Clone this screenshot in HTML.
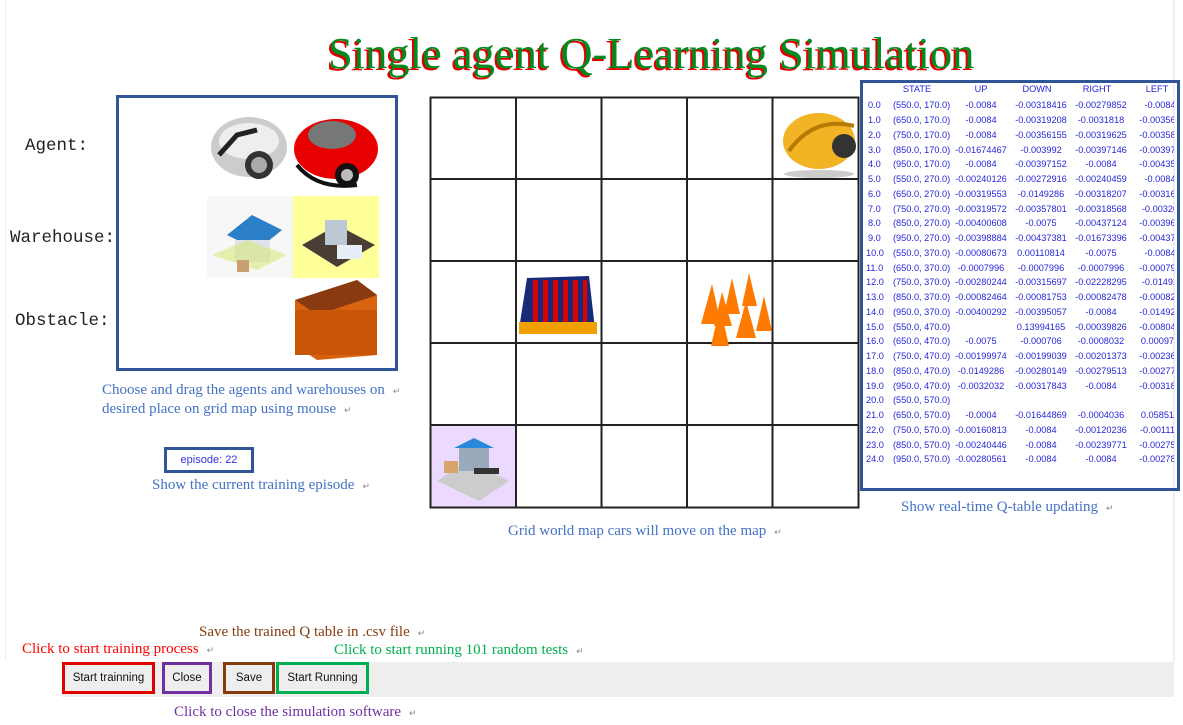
<!DOCTYPE html>
<html><head><meta charset="utf-8"><style>
body{margin:0;width:1183px;height:725px;position:relative;background:#fff;overflow:hidden;font-family:"Liberation Serif",serif}
.a{position:absolute}
.cap{position:absolute;font-family:"Liberation Serif",serif;font-size:15px;color:#4472c4;white-space:nowrap}
.ret{font-size:9px;color:#888;margin-left:8px}
.lbl{position:absolute;font-family:"Liberation Mono",monospace;font-size:17.5px;color:#222}
.q{position:absolute;left:0;width:330px;font-family:"Liberation Sans",sans-serif;font-size:9.2px;color:#2626d9;white-space:nowrap;height:14px}
.q span{position:absolute;top:0}
.q .c{width:80px;text-align:center}
.btn{position:absolute;top:662px;height:32px;background:#eee;font-family:"Liberation Sans",sans-serif;font-size:11.5px;color:#111;display:flex;align-items:center;justify-content:center;box-sizing:border-box}
</style></head><body>
<div class="a" style="left:5px;top:0;width:1px;height:660px;background:#eee"></div>
<div class="a" style="left:1173px;top:0;width:2px;height:662px;background:#eee"></div>

<div class="a" style="left:326px;top:28px;font-size:44.5px;color:#e00000;white-space:nowrap;line-height:54px">Single agent Q-Learning Simulation</div>
<div class="a" style="left:328px;top:26px;font-size:44.5px;color:#008a20;white-space:nowrap;line-height:54px">Single agent Q-Learning Simulation</div>

<div class="lbl" style="left:25px;top:136px">Agent:</div>
<div class="lbl" style="left:10px;top:228px">Warehouse:</div>
<div class="lbl" style="left:15px;top:311px">Obstacle:</div>

<div class="a" style="left:116px;top:95px;width:276px;height:270px;border:3px solid #2f5597"></div>
<svg class="a" style="left:207px;top:105px" width="175" height="260">
 <ellipse cx="42" cy="42" rx="38" ry="30" fill="#ccc"/><ellipse cx="42" cy="36" rx="30" ry="18" fill="#eee"/><path d="M12 50 L30 30 L50 25" stroke="#222" stroke-width="5" fill="none"/><circle cx="52" cy="60" r="14" fill="#333"/><circle cx="52" cy="60" r="8" fill="#aaa"/>
 <ellipse cx="129" cy="44" rx="42" ry="30" fill="#e80000"/><ellipse cx="125" cy="30" rx="24" ry="14" fill="#777"/><circle cx="140" cy="70" r="12" fill="#111"/><circle cx="140" cy="70" r="6" fill="#bbb"/><path d="M90 60 Q110 85 150 80" stroke="#111" stroke-width="4" fill="none"/>
 <rect x="0" y="91" width="86" height="82" fill="#f7f7f7"/><polygon points="20,130 45,110 75,125 50,145" fill="#2a7fc7"/><rect x="28" y="135" width="35" height="22" fill="#dde4ee"/><polygon points="5,150 50,165 80,150 40,135" fill="#d8e87a" opacity=".6"/><rect x="30" y="155" width="12" height="12" fill="#c9a070"/>
 <rect x="86" y="91" width="86" height="82" fill="#ffff99"/><polygon points="95,140 130,120 168,140 130,162" fill="#4a3d33"/><rect x="118" y="115" width="22" height="25" fill="#bcc8d4"/><rect x="130" y="140" width="25" height="14" fill="#e6eef8"/>
 <polygon points="88,195 150,175 170,190 170,250 110,255 88,240" fill="#d9620e"/><polygon points="88,195 150,175 170,190 110,210" fill="#8a3a10"/><rect x="88" y="205" width="82" height="45" fill="#c85508"/>
</svg>

<div class="cap" style="left:102px;top:382px">Choose and drag the agents and warehouses on<span class="ret">↵</span></div>
<div class="cap" style="left:102px;top:401px">desired place on grid map using mouse<span class="ret">↵</span></div>

<div class="a" style="left:164px;top:447px;width:84px;height:20px;border:3px solid #2f5597;font-family:'Liberation Sans',sans-serif;font-size:11px;color:#3333dd;text-align:center;line-height:20px">episode: 22</div>
<div class="cap" style="left:152px;top:477px">Show the current training episode<span class="ret">↵</span></div>

<svg class="a" style="left:429px;top:96px" width="432" height="416">
 <rect x="1.5" y="329.5" width="85" height="82" fill="#ecd9ff"/>
 <g stroke="#222" stroke-width="2" fill="none">
  <rect x="1.5" y="1.5" width="428" height="410"/>
  <path d="M87 1V412M172.5 1V412M258 1V412M343.5 1V412M1 83H430M1 165H430M1 247H430M1 329H430"/>
 </g>
 <g>
  <ellipse cx="390" cy="45" rx="36" ry="28" fill="#f2b324"/><path d="M360 55 Q385 20 425 30" stroke="#b57a00" stroke-width="4" fill="none"/><circle cx="415" cy="50" r="12" fill="#333"/><ellipse cx="390" cy="78" rx="35" ry="4" fill="#ccc"/>
  <polygon points="90,233 98,182 160,180 166,233" fill="#1a2a7a"/><g fill="#d00"><rect x="104" y="184" width="5" height="44"/><rect x="114" y="184" width="5" height="44"/><rect x="124" y="184" width="5" height="44"/><rect x="134" y="184" width="5" height="44"/><rect x="144" y="184" width="5" height="44"/><rect x="154" y="184" width="4" height="44"/></g><rect x="90" y="226" width="78" height="12" fill="#f0a000"/>
  <g fill="#ff7a00"><polygon points="272,228 283,188 292,228"/><polygon points="285,230 293,196 303,230"/><polygon points="295,218 303,182 311,218"/><polygon points="313,210 320,177 328,210"/><polygon points="307,242 317,205 327,242"/><polygon points="282,250 291,210 300,250"/><polygon points="327,235 335,200 343,235"/></g>
  <polygon points="8,385 50,405 80,385 40,365" fill="#ccc"/><rect x="30" y="350" width="30" height="25" fill="#99aabb"/><polygon points="25,352 45,342 65,352" fill="#2a88d8"/><rect x="15" y="365" width="14" height="12" fill="#d8a46a"/><rect x="45" y="372" width="25" height="6" fill="#333"/>
 </g>
</svg>
<div class="cap" style="left:508px;top:523px">Grid world map cars will move on the map<span class="ret">↵</span></div>

<div class="a" style="left:860px;top:80px;width:314px;height:405px;border:3px solid #2f5597"></div>
<div class="cap" style="left:901px;top:499px">Show real-time Q-table updating<span class="ret">↵</span></div>

<div class="a" style="left:863px;top:83px;width:311px;height:405px;overflow:hidden">
<div class="a" style="left:-863px;top:-83px;width:1183px;height:600px">
<div class="q" style="left:863px;top:84px"><span class="c" style="left:14px">STATE</span><span class="c" style="left:78px">UP</span><span class="c" style="left:134px">DOWN</span><span class="c" style="left:194px">RIGHT</span><span class="c" style="left:254px">LEFT</span></div>
<div class="q" style="left:863px;top:100px"><span style="left:5px">0.0</span><span style="left:30px">(550.0, 170.0)</span><span class="c" style="left:78px">-0.0084</span><span class="c" style="left:138px">-0.00318416</span><span class="c" style="left:198px">-0.00279852</span><span class="c" style="left:257px">-0.0084</span></div>
<div class="q" style="left:863px;top:115px"><span style="left:5px">1.0</span><span style="left:30px">(650.0, 170.0)</span><span class="c" style="left:78px">-0.0084</span><span class="c" style="left:138px">-0.00319208</span><span class="c" style="left:198px">-0.0031818</span><span class="c" style="left:257px">-0.003561</span></div>
<div class="q" style="left:863px;top:130px"><span style="left:5px">2.0</span><span style="left:30px">(750.0, 170.0)</span><span class="c" style="left:78px">-0.0084</span><span class="c" style="left:138px">-0.00356155</span><span class="c" style="left:198px">-0.00319625</span><span class="c" style="left:257px">-0.003581</span></div>
<div class="q" style="left:863px;top:145px"><span style="left:5px">3.0</span><span style="left:30px">(850.0, 170.0)</span><span class="c" style="left:78px">-0.01674467</span><span class="c" style="left:138px">-0.003992</span><span class="c" style="left:198px">-0.00397146</span><span class="c" style="left:257px">-0.003974</span></div>
<div class="q" style="left:863px;top:159px"><span style="left:5px">4.0</span><span style="left:30px">(950.0, 170.0)</span><span class="c" style="left:78px">-0.0084</span><span class="c" style="left:138px">-0.00397152</span><span class="c" style="left:198px">-0.0084</span><span class="c" style="left:257px">-0.004357</span></div>
<div class="q" style="left:863px;top:174px"><span style="left:5px">5.0</span><span style="left:30px">(550.0, 270.0)</span><span class="c" style="left:78px">-0.00240126</span><span class="c" style="left:138px">-0.00272916</span><span class="c" style="left:198px">-0.00240459</span><span class="c" style="left:257px">-0.0084</span></div>
<div class="q" style="left:863px;top:189px"><span style="left:5px">6.0</span><span style="left:30px">(650.0, 270.0)</span><span class="c" style="left:78px">-0.00319553</span><span class="c" style="left:138px">-0.0149286</span><span class="c" style="left:198px">-0.00318207</span><span class="c" style="left:257px">-0.003164</span></div>
<div class="q" style="left:863px;top:204px"><span style="left:5px">7.0</span><span style="left:30px">(750.0, 270.0)</span><span class="c" style="left:78px">-0.00319572</span><span class="c" style="left:138px">-0.00357801</span><span class="c" style="left:198px">-0.00318568</span><span class="c" style="left:257px">-0.00320</span></div>
<div class="q" style="left:863px;top:218px"><span style="left:5px">8.0</span><span style="left:30px">(850.0, 270.0)</span><span class="c" style="left:78px">-0.00400608</span><span class="c" style="left:138px">-0.0075</span><span class="c" style="left:198px">-0.00437124</span><span class="c" style="left:257px">-0.003964</span></div>
<div class="q" style="left:863px;top:233px"><span style="left:5px">9.0</span><span style="left:30px">(950.0, 270.0)</span><span class="c" style="left:78px">-0.00398884</span><span class="c" style="left:138px">-0.00437381</span><span class="c" style="left:198px">-0.01673396</span><span class="c" style="left:257px">-0.004378</span></div>
<div class="q" style="left:863px;top:248px"><span style="left:3px">10.0</span><span style="left:30px">(550.0, 370.0)</span><span class="c" style="left:78px">-0.00080673</span><span class="c" style="left:138px">0.00110814</span><span class="c" style="left:198px">-0.0075</span><span class="c" style="left:257px">-0.0084</span></div>
<div class="q" style="left:863px;top:263px"><span style="left:3px">11.0</span><span style="left:30px">(650.0, 370.0)</span><span class="c" style="left:78px">-0.0007996</span><span class="c" style="left:138px">-0.0007996</span><span class="c" style="left:198px">-0.0007996</span><span class="c" style="left:257px">-0.000796</span></div>
<div class="q" style="left:863px;top:277px"><span style="left:3px">12.0</span><span style="left:30px">(750.0, 370.0)</span><span class="c" style="left:78px">-0.00280244</span><span class="c" style="left:138px">-0.00315697</span><span class="c" style="left:198px">-0.02228295</span><span class="c" style="left:257px">-0.01492</span></div>
<div class="q" style="left:863px;top:292px"><span style="left:3px">13.0</span><span style="left:30px">(850.0, 370.0)</span><span class="c" style="left:78px">-0.00082464</span><span class="c" style="left:138px">-0.00081753</span><span class="c" style="left:198px">-0.00082478</span><span class="c" style="left:257px">-0.000821</span></div>
<div class="q" style="left:863px;top:307px"><span style="left:3px">14.0</span><span style="left:30px">(950.0, 370.0)</span><span class="c" style="left:78px">-0.00400292</span><span class="c" style="left:138px">-0.00395057</span><span class="c" style="left:198px">-0.0084</span><span class="c" style="left:257px">-0.014928</span></div>
<div class="q" style="left:863px;top:322px"><span style="left:3px">15.0</span><span style="left:30px">(550.0, 470.0)</span><span class="c" style="left:138px">0.13994165</span><span class="c" style="left:198px">-0.00039826</span><span class="c" style="left:257px">-0.008045</span></div>
<div class="q" style="left:863px;top:336px"><span style="left:3px">16.0</span><span style="left:30px">(650.0, 470.0)</span><span class="c" style="left:78px">-0.0075</span><span class="c" style="left:138px">-0.000706</span><span class="c" style="left:198px">-0.0008032</span><span class="c" style="left:257px">0.000973</span></div>
<div class="q" style="left:863px;top:351px"><span style="left:3px">17.0</span><span style="left:30px">(750.0, 470.0)</span><span class="c" style="left:78px">-0.00199974</span><span class="c" style="left:138px">-0.00199039</span><span class="c" style="left:198px">-0.00201373</span><span class="c" style="left:257px">-0.002360</span></div>
<div class="q" style="left:863px;top:366px"><span style="left:3px">18.0</span><span style="left:30px">(850.0, 470.0)</span><span class="c" style="left:78px">-0.0149286</span><span class="c" style="left:138px">-0.00280149</span><span class="c" style="left:198px">-0.00279513</span><span class="c" style="left:257px">-0.002770</span></div>
<div class="q" style="left:863px;top:381px"><span style="left:3px">19.0</span><span style="left:30px">(950.0, 470.0)</span><span class="c" style="left:78px">-0.0032032</span><span class="c" style="left:138px">-0.00317843</span><span class="c" style="left:198px">-0.0084</span><span class="c" style="left:257px">-0.003181</span></div>
<div class="q" style="left:863px;top:395px"><span style="left:3px">20.0</span><span style="left:30px">(550.0, 570.0)</span></div>
<div class="q" style="left:863px;top:410px"><span style="left:3px">21.0</span><span style="left:30px">(650.0, 570.0)</span><span class="c" style="left:78px">-0.0004</span><span class="c" style="left:138px">-0.01644869</span><span class="c" style="left:198px">-0.0004036</span><span class="c" style="left:257px">0.058519</span></div>
<div class="q" style="left:863px;top:425px"><span style="left:3px">22.0</span><span style="left:30px">(750.0, 570.0)</span><span class="c" style="left:78px">-0.00160813</span><span class="c" style="left:138px">-0.0084</span><span class="c" style="left:198px">-0.00120236</span><span class="c" style="left:257px">-0.001112</span></div>
<div class="q" style="left:863px;top:440px"><span style="left:3px">23.0</span><span style="left:30px">(850.0, 570.0)</span><span class="c" style="left:78px">-0.00240446</span><span class="c" style="left:138px">-0.0084</span><span class="c" style="left:198px">-0.00239771</span><span class="c" style="left:257px">-0.002754</span></div>
<div class="q" style="left:863px;top:454px"><span style="left:3px">24.0</span><span style="left:30px">(950.0, 570.0)</span><span class="c" style="left:78px">-0.00280561</span><span class="c" style="left:138px">-0.0084</span><span class="c" style="left:198px">-0.0084</span><span class="c" style="left:257px">-0.002784</span></div>
</div>
</div>

<div class="a" style="left:62px;top:662px;width:1112px;height:35px;background:#eee"></div>
<div class="btn" style="left:62px;width:93px;border:3px solid #e00000">Start trainning</div>
<div class="btn" style="left:162px;width:50px;border:3px solid #7030a0">Close</div>
<div class="btn" style="left:223px;width:52px;border:3px solid #843c0c">Save</div>
<div class="btn" style="left:276px;width:93px;border:3px solid #00b050">Start Running</div>

<div class="cap" style="left:199px;top:624px;color:#843c0c">Save the trained Q table in .csv file<span class="ret">↵</span></div>
<div class="cap" style="left:22px;top:641px;color:#ff0000">Click to start training process<span class="ret">↵</span></div>
<div class="cap" style="left:334px;top:642px;color:#00b050">Click to start running 101 random tests<span class="ret">↵</span></div>
<div class="cap" style="left:174px;top:704px;color:#7030a0">Click to close the simulation software<span class="ret">↵</span></div>
</body></html>
